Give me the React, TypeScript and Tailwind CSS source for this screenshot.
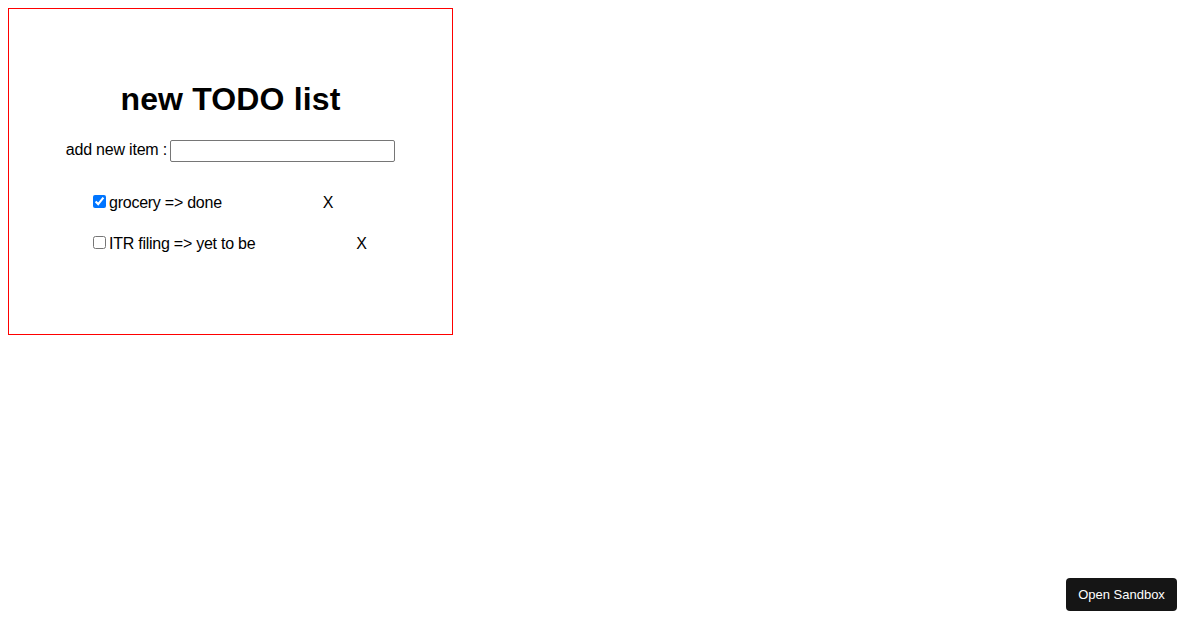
import { useState } from "react";

type Todo = { id: number; text: string; done: boolean };

const initialTodos: Todo[] = [
  { id: 1, text: "grocery => done", done: true },
  { id: 2, text: "ITR filing => yet to be", done: false },
];

export default function App() {
  const [todos, setTodos] = useState(initialTodos);
  const [draft, setDraft] = useState("");

  function toggle(id: number) {
    setTodos((prev) => prev.map((t) => (t.id === id ? { ...t, done: !t.done } : t)));
  }

  function remove(id: number) {
    setTodos((prev) => prev.filter((t) => t.id !== id));
  }

  return (
    <div className="min-h-[630px] bg-white p-2 font-['Liberation_Sans',Arial,sans-serif] text-black">
      <div className="flex h-[327px] w-[445px] flex-col items-center border border-[#ff0000]">
        <h1 className="mt-[72px] text-[32px] font-bold leading-[37px] tracking-[0.15px]">new TODO list</h1>

        {/* add row */}
        <div className="mt-[22px] flex items-start text-[16px] leading-[18px] tracking-[-0.2px]">
          <span className="mt-[1px] mr-[-1px]">add new item :&nbsp;</span>
          <input
            value={draft}
            onChange={(e) => setDraft(e.target.value)}
            className="h-[22px] w-[225px] rounded-[2px] border border-[#767676] px-[2px] text-[13px] outline-none"
          />
        </div>

        {/* items */}
        <ul className="mt-[32px] flex flex-col gap-[23px] self-stretch pl-[84px] text-[16px] leading-[18.4px] tracking-[-0.25px]">
          {todos.map((t) => (
            <li key={t.id}>
              <input type="checkbox" checked={t.done} onChange={() => toggle(t.id)} className="mr-[3px]" />
              {t.text}
              <span className="ml-[101px] cursor-pointer" onClick={() => remove(t.id)}>
                X
              </span>
            </li>
          ))}
        </ul>
      </div>

      <button
        type="button"
        className="fixed right-[23px] bottom-[19px] h-[33px] w-[111px] rounded-[4px] bg-[#151515] text-[13px] text-white"
      >
        Open Sandbox
      </button>
    </div>
  );
}
